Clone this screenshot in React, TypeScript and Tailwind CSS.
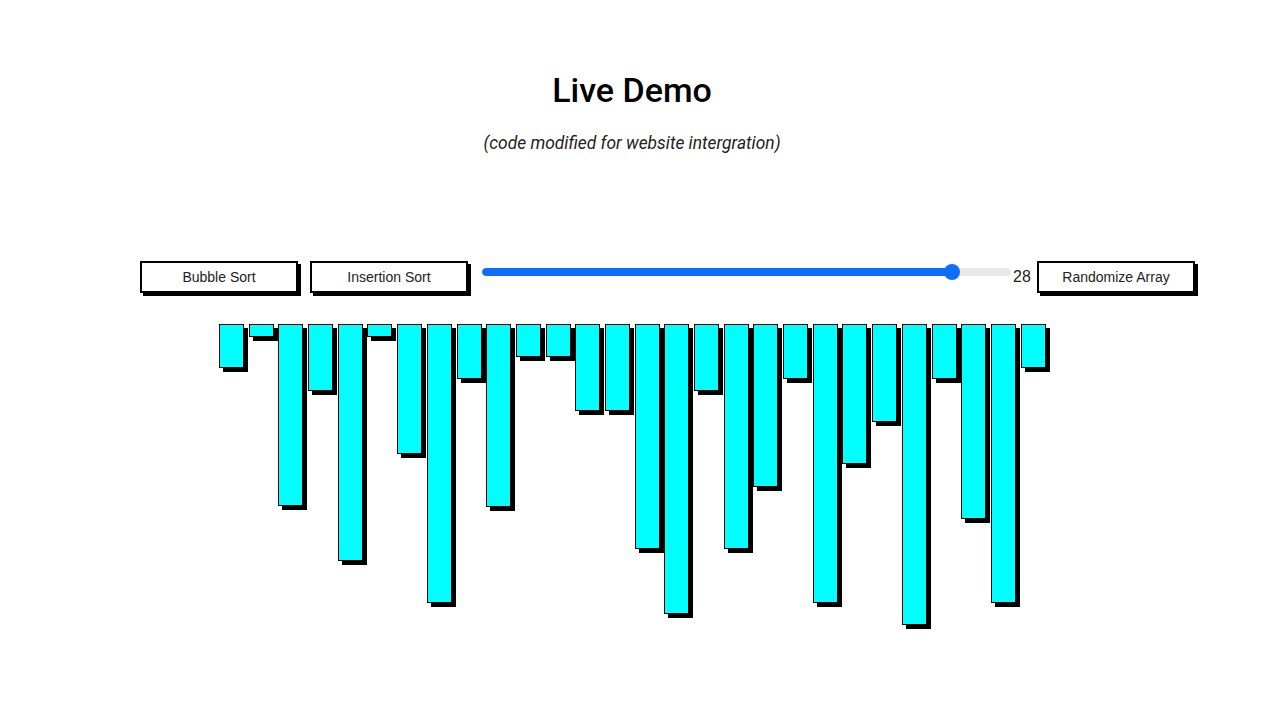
import React from 'react';

const heights = [
  44, 13, 182, 67, 237, 13, 130, 279, 55, 183, 33, 33, 87, 87,
  225, 290, 67, 225, 163, 55, 279, 140, 98, 301, 55, 195, 279, 44,
];

const SortButton: React.FC<{ label: string }> = ({ label }) => (
  <button className="w-[158px] h-[32px] bg-white border-2 border-black shadow-[3px_3px_0_#000] text-[14px] text-[#222] font-['Liberation_Sans',Arial,sans-serif] shrink-0">
    {label}
  </button>
);

export default function App() {
  const value = 28;
  const pct = 88.8;

  return (
    <div className="w-[1280px] h-[720px] bg-white overflow-hidden font-['Roboto',sans-serif]">
      <div className="pt-[68px] pr-[16px] text-center">
        <h1 className="text-[34px] leading-[44px] font-medium text-black">Live Demo</h1>
        <p className="mt-[18px] text-[17.4px] italic text-[#222]">(code modified for website intergration)</p>
      </div>

      {/* Controls */}
      <div className="mt-[105px] pl-[140px] flex items-center h-[32px]">
        <SortButton label="Bubble Sort" />
        <div className="w-[12px]" />
        <SortButton label="Insertion Sort" />
        <div className="ml-[14px] w-[529px] h-[32px] flex items-center relative -mt-[10px]">
          <div className="w-full h-[8px] rounded-full bg-[#e9e9e9] overflow-hidden">
            <div className="h-full bg-[#0d6efd] rounded-full" style={{ width: `${pct}%` }} />
          </div>
          <div
            className="absolute w-[16px] h-[16px] rounded-full bg-[#0d6efd] top-[8px] -ml-[8px]"
            style={{ left: `${pct}%` }}
          />
        </div>
        <span className="ml-[2px] w-[24px] text-[16px] text-[#222] font-['Liberation_Sans',Arial,sans-serif] -mt-[1px]">{value}</span>
        <SortButton label="Randomize Array" />
      </div>

      {/* Bars */}
      <div className="mt-[31px] pl-[219px] flex items-start gap-[4.7px]">
        {heights.map((h, i) => (
          <div
            key={i}
            className="w-[25px] bg-[#00ffff] border-[1.5px] border-black shadow-[4px_4px_0_#000] shrink-0"
            style={{ height: `${h}px` }}
          />
        ))}
      </div>
    </div>
  );
}
